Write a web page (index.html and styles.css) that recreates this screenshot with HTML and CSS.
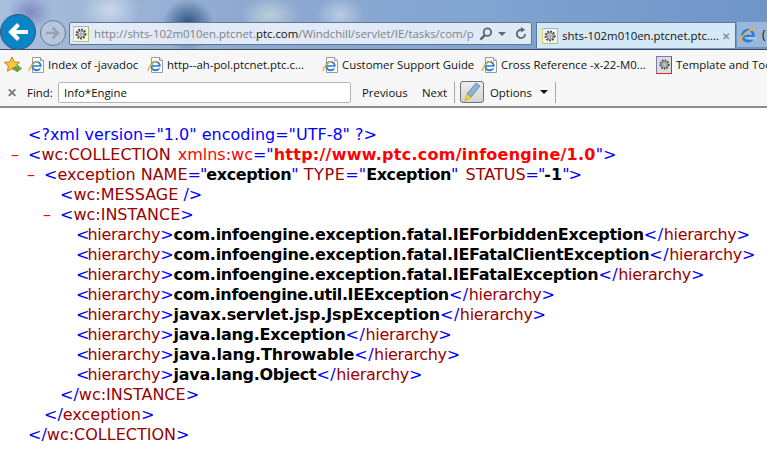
FILE: index.html
```html
<!DOCTYPE html>
<html lang="en">
<head>
<meta charset="utf-8">
<title>XML view</title>
<link rel="stylesheet" href="styles.css">
</head>
<body>
<svg class="defs" width="0" height="0" aria-hidden="true">
  <symbol id="ie" viewBox="0 0 18 18">
    <path d="M4.500 1.500h8l3 3V16.500h-11z" fill="#fff" stroke="#9a9aa4"/>
    <path d="M12.500 1.500v3h3" fill="#e8e8ee" stroke="#9a9aa4"/>
    <circle cx="8.500" cy="10" r="4.200" fill="none" stroke="#2b7fd8" stroke-width="2"/>
    <path d="M4.500 10h8" stroke="#2b7fd8" stroke-width="1.600"/>
    <rect x="9.500" y="10.800" width="5" height="1.600" fill="#fff"/>
    <path d="M1.200 15C.6 12 5 7 10 5" fill="none" stroke="#f0b92c" stroke-width="1.500"/>
  </symbol>
  <symbol id="gear" viewBox="0 0 16 16">
    <circle cx="8" cy="8" r="5" fill="none" stroke="#444" stroke-width="2.400" stroke-dasharray="2 1.300"/>
    <circle cx="8" cy="8" r="3.600" fill="none" stroke="#666" stroke-width="1"/>
    <circle cx="8" cy="8" r="1.500" fill="#e4e4e4" stroke="#555" stroke-width=".7"/>
  </symbol>
</svg>

<header class="chrome">
  <div class="back">
    <svg width="24" height="24" viewBox="0 0 24 24"><path d="M22 12H6M12.500 4.500 5 12l7.500 7.500" fill="none" stroke="#fff" stroke-width="4"/></svg>
  </div>
  <div class="forward">
    <svg width="18" height="18" viewBox="0 0 18 18"><path d="M2 9h12M8.500 3.500 14 9l-5.500 5.500" fill="none" stroke="#9aa3ad" stroke-width="2.600"/></svg>
  </div>
  <div class="address">
    <span class="site-tile"><svg width="14" height="14"><use href="#gear"/></svg></span>
    <span class="url">http://shts-102m010en.ptcnet.<b>ptc.com</b>/Windchill/servlet/IE/tasks/com/p</span>
    <span class="addr-tools">
      <svg width="14" height="14" viewBox="0 0 15 15"><circle cx="9" cy="5.500" r="4" fill="none" stroke="#5c6a78" stroke-width="2"/><path d="M6 9 1.500 13.500" stroke="#5c6a78" stroke-width="2.600"/></svg>
      <i class="caret grey"></i>
      <svg class="refresh" width="12" height="13" viewBox="0 0 13 14"><path d="M11 7.500A4.500 4.500 0 1 1 7 3" fill="none" stroke="#5c6a78" stroke-width="2"/><path d="M6.500 0 11 3 6.500 6z" fill="#5c6a78"/></svg>
    </span>
  </div>
  <div class="tab active">
    <span class="site-tile"><svg width="14" height="14"><use href="#gear"/></svg></span>
    <span class="tab-title">shts-102m010en.ptcnet.ptc....</span>
    <span class="tab-close">✕</span>
  </div>
  <div class="tab other">
    <svg width="20" height="20" viewBox="0 0 18 18"><circle cx="9" cy="9.500" r="5" fill="none" stroke="#2b7fd8" stroke-width="2.400"/><path d="M4.500 9.800h9" stroke="#2b7fd8" stroke-width="2"/><rect x="10" y="11" width="6" height="2" fill="#bcd3ea"/><path d="M1.500 16C1 12 8 5 15 3" fill="none" stroke="#f0b92c" stroke-width="1.500"/></svg>
    <span class="tab-title">(</span>
  </div>
</header>

<nav class="favorites">
  <svg class="star" width="18" height="18" viewBox="0 0 18 18"><path d="M8 1l2.200 4.800 5.300.6-3.900 3.600 1 5.200L8 12.600 3.400 15.200l1-5.200L.5 6.400l5.300-.6z" fill="#f6c83c" stroke="#b9862a"/><path d="M9 11.500h4V9l4.500 3.500L13 16v-2.500H9z" fill="#58b83a" stroke="#3b8a28" stroke-width=".6"/></svg>
  <a class="fav w1"><svg width="18" height="18"><use href="#ie"/></svg><span>Index of -javadoc</span></a>
  <a class="fav w2"><svg width="18" height="18"><use href="#ie"/></svg><span>http--ah-pol.ptcnet.ptc.c...</span></a>
  <a class="fav w3"><svg width="18" height="18"><use href="#ie"/></svg><span>Customer Support Guide</span></a>
  <a class="fav w4"><svg width="18" height="18"><use href="#ie"/></svg><span>Cross Reference -x-22-M0...</span></a>
  <a class="fav w5"><span class="fav-gear"><svg width="13" height="13"><use href="#gear"/></svg></span><span>Template and Too</span></a>
</nav>

<div class="findbar">
  <span class="find-close">✕</span>
  <label class="find-label">Find:</label>
  <div class="find-input">Info*Engine</div>
  <span class="find-btn prev">Previous</span>
  <span class="find-btn next">Next</span>
  <i class="sep"></i>
  <span class="hilite">
    <svg width="18" height="20" viewBox="0 0 18 20"><path d="M13 1l4 3L8 15l-4-3z" fill="#8cb2d8" stroke="#5b7f9f" stroke-width=".8"/><path d="M4 12l4 3-3 2-3 2z" fill="#f2e22c" stroke="#b5a820" stroke-width=".8"/></svg>
  </span>
  <span class="options">Options</span>
  <i class="caret"></i>
  <i class="sep last"></i>
</div>

<main class="xml">
  <div class="row d0"><span class="b">&lt;?xml version="1.0" encoding="UTF-8" ?&gt;</span></div>
  <div class="row d0"><span class="minus">–</span><span class="b">&lt;</span><span class="t">wc:COLLECTION</span> <span class="a">xmlns:wc</span><span class="b">="</span><span class="ns">http://www.ptc.com/infoengine/1.0</span><span class="b">"&gt;</span></div>
  <div class="row d1"><span class="minus">–</span><span class="b">&lt;</span><span class="t">exception</span> <span class="t">NAME</span><span class="b eq">="</span><span class="v tight">exception</span><span class="b">"</span> <span class="t loose">TYPE</span><span class="b">="</span><span class="v tight">Exception</span><span class="b">"</span> <span class="t st">STATUS</span><span class="b eq">="</span><span class="v flat">-1</span><span class="b eq">"&gt;</span></div>
  <div class="row d2"><span class="b">&lt;</span><span class="t">wc:MESSAGE</span><span class="b"> /&gt;</span></div>
  <div class="row d2"><span class="minus">–</span><span class="b">&lt;</span><span class="t">wc:INSTANCE</span><span class="b">&gt;</span></div>
  <div class="row d3"><span class="b open">&lt;</span><span class="t h">hierarchy</span><span class="b">&gt;</span><span class="v">com.infoengine.exception.fatal.IEForbiddenException</span><span class="b shut">&lt;/</span><span class="t h">hierarchy</span><span class="b">&gt;</span></div>
  <div class="row d3"><span class="b open">&lt;</span><span class="t h">hierarchy</span><span class="b">&gt;</span><span class="v">com.infoengine.exception.fatal.IEFatalClientException</span><span class="b shut">&lt;/</span><span class="t h">hierarchy</span><span class="b">&gt;</span></div>
  <div class="row d3"><span class="b open">&lt;</span><span class="t h">hierarchy</span><span class="b">&gt;</span><span class="v">com.infoengine.exception.fatal.IEFatalException</span><span class="b shut">&lt;/</span><span class="t h">hierarchy</span><span class="b">&gt;</span></div>
  <div class="row d3"><span class="b open">&lt;</span><span class="t h">hierarchy</span><span class="b">&gt;</span><span class="v util">com.infoengine.util.IEException</span><span class="b shut">&lt;/</span><span class="t h">hierarchy</span><span class="b">&gt;</span></div>
  <div class="row d3"><span class="b open">&lt;</span><span class="t h">hierarchy</span><span class="b">&gt;</span><span class="v slim">javax.servlet.jsp.JspException</span><span class="b shut">&lt;/</span><span class="t h">hierarchy</span><span class="b">&gt;</span></div>
  <div class="row d3"><span class="b open">&lt;</span><span class="t h">hierarchy</span><span class="b">&gt;</span><span class="v">java.lang.Exception</span><span class="b shut">&lt;/</span><span class="t h">hierarchy</span><span class="b">&gt;</span></div>
  <div class="row d3"><span class="b open">&lt;</span><span class="t h">hierarchy</span><span class="b">&gt;</span><span class="v slim">java.lang.Throwable</span><span class="b shut">&lt;/</span><span class="t h">hierarchy</span><span class="b">&gt;</span></div>
  <div class="row d3"><span class="b open">&lt;</span><span class="t h">hierarchy</span><span class="b">&gt;</span><span class="v">java.lang.Object</span><span class="b shut">&lt;/</span><span class="t h">hierarchy</span><span class="b">&gt;</span></div>
  <div class="row d2"><span class="b">&lt;/</span><span class="t">wc:INSTANCE</span><span class="b">&gt;</span></div>
  <div class="row d1"><span class="b">&lt;/</span><span class="t">exception</span><span class="b">&gt;</span></div>
  <div class="row d0"><span class="b">&lt;/</span><span class="t">wc:COLLECTION</span><span class="b">&gt;</span></div>
</main>
</body>
</html>
```
FILE: styles.css
```css
* { box-sizing: border-box; }
html, body { margin: 0; height: 100%; }
body {
  width: 767px;
  height: 464px;
  overflow: hidden;
  background: #fff;
  font-family: "Open Sans", "Noto Sans", sans-serif;
  color: #111;
}
.defs { position: absolute; }

/* Window chrome */
.chrome {
  height: 50px;
  padding: 22px 0 0 69px;
  display: flex;
  align-items: flex-start;
  position: relative;
  background:
    radial-gradient(ellipse 26px 26px at 188px 25px, rgba(20, 60, 110, .85), rgba(60, 110, 160, 0) 100%),
    radial-gradient(ellipse 30px 22px at 110px 10px, rgba(240, 245, 250, .55), transparent 100%),
    radial-gradient(ellipse 30px 18px at 270px 15px, rgba(225, 240, 225, .55), transparent 100%),
    radial-gradient(ellipse 25px 18px at 340px 15px, rgba(235, 240, 245, .5), transparent 100%),
    radial-gradient(ellipse 22px 18px at 30px 12px, rgba(90, 90, 170, .5), transparent 100%),
    linear-gradient(90deg, #a9bfdd 0%, #8fa9d0 30%, #83a5d2 60%, #6f94c6 100%);
  border-bottom: 1px solid #3c4a5c;
}
.back {
  position: absolute;
  left: 0;
  top: 14px;
  width: 36px;
  height: 36px;
  border-radius: 50%;
  background: #0c84c8;
  border: 1px solid #33587c;
  display: flex;
  align-items: center;
  justify-content: center;
}
.forward {
  position: absolute;
  left: 40px;
  top: 20px;
  width: 26px;
  height: 26px;
  border-radius: 50%;
  background: rgba(190, 205, 225, .7);
  border: 1px solid #66788f;
  display: flex;
  align-items: center;
  justify-content: center;
}
.address {
  width: 463px;
  height: 23px;
  flex: none;
  display: flex;
  align-items: center;
  padding: 0 4px 0 3px;
  background: rgba(232, 240, 249, .92);
  border: 1px solid #5f7795;
  border-radius: 2px;
  font-size: 11.4px;
  color: #7d8288;
}
.url {
  flex: 1;
  min-width: 0;
  margin-left: 5px;
  overflow: hidden;
  white-space: nowrap;
}
.url b { font-weight: 400; color: #111; }
.site-tile {
  width: 16px;
  height: 16px;
  flex: none;
  display: flex;
  align-items: center;
  justify-content: center;
  background: #f4f4f4;
  border: 1px solid;
  border-color: #8fb4dc #9ccf5f #9ccf5f #e6d25a;
}
.addr-tools { display: flex; align-items: center; gap: 5px; flex: none; margin-left: 3px; }
.refresh { margin-left: 4px; }
.tab {
  height: 26px;
  display: flex;
  align-items: center;
  flex: none;
}
.tab.active {
  width: 200px;
  margin-left: 4px;
  padding: 0 5px;
  background: #d5e8f8;
  border: 1px solid #5f7795;
  border-bottom: none;
  font-size: 11.4px;
  color: #111;
}
.tab-title { margin-left: 4px; white-space: nowrap; flex: 1; }
.tab-close { color: #8a8f95; font-size: 10px; font-weight: 700; }
.tab.other {
  flex: 1;
  margin-left: 1px;
  padding-left: 1px;
  height: 25px;
  min-width: 30px;
  background: rgba(190, 210, 235, .55);
  font-size: 12px;
}

/* Favorites */
.favorites {
  height: 28px;
  display: flex;
  align-items: center;
  padding: 1px 0 0 4px;
  background: #f7f7f7;
  font-size: 11.4px;
  white-space: nowrap;
}
.star { flex: none; margin-right: 6px; }
.fav { display: flex; align-items: center; gap: 2px; flex: none; color: #111; }
.w1 { width: 119px; }
.w2 { width: 175px; }
.w3 { width: 159px; }
.w4 { width: 175px; }
.fav-gear {
  width: 16px; height: 18px; display: flex; align-items: center; justify-content: center;
  margin-right: 2px;
  background: #ddd;
  border: 1px solid;
  border-color: #7a7ab8 #d22 #d22 #7a7ab8;
}

/* Find bar */
.findbar {
  height: 30px;
  display: flex;
  align-items: center;
  background: #f7f7f7;
  border-bottom: 2px solid #8d8d8d;
  font-size: 11.4px;
  padding-left: 7px;
  white-space: nowrap;
}
.find-close { color: #777; font-size: 12px; font-weight: 700; width: 20px; }
.find-label { width: 31px; }
.find-input {
  width: 293px;
  height: 21px;
  padding: 0 5px;
  display: flex;
  align-items: center;
  background: #fff;
  border: 1px solid #b5b5b5;
  border-radius: 2px;
}
.find-btn { flex: none; }
.prev { margin-left: 11px; width: 60px; }
.next { width: 32px; }
.sep { width: 1px; height: 21px; background: #a6a6a6; flex: none; }
.sep.last { margin-left: 7px; }
.hilite {
  width: 24px;
  height: 22px;
  margin-left: 5px;
  display: flex;
  align-items: center;
  justify-content: center;
  background: linear-gradient(#ececec, #d4d4d4);
  border: 1px solid #6f6f6f;
  border-radius: 3px;
  flex: none;
}
.options { margin-left: 6px; }
.caret {
  width: 0; height: 0; flex: none;
  border: 4px solid transparent;
  border-top: 4px solid #111;
  border-bottom: 0;
  margin-left: 8px;
}
.caret.grey { border-top-color: #5c6a78; margin-left: 0; }

/* XML tree */
.xml {
  padding-top: 17px;
  font-family: "DejaVu Sans", sans-serif;
  font-size: 16px;
  line-height: 20px;
}
.row { height: 20px; position: relative; white-space: pre; }
.d0 { padding-left: 28px; }
.d1 { padding-left: 44px; }
.d2 { padding-left: 60px; }
.d3 { padding-left: 76px; }
.minus { position: absolute; margin-left: -17px; color: #f00; }
.b { color: #00f; }
.t { color: #900; }
.a { color: #f00; margin-left: 2px; }
.v { color: #000; font-weight: 700; letter-spacing: -.28px; }
.ns { color: #f00; font-weight: 700; letter-spacing: .25px; }

/* Per-run spacing, to hold each run to the reference's column */
.open { letter-spacing: -2px; }
.shut { letter-spacing: .5px; }
.h { letter-spacing: -.3px; }
.eq { letter-spacing: -1px; }
.tight { letter-spacing: -.4px; }
.flat { letter-spacing: 0; }
.loose { letter-spacing: .6px; }
.st { margin-left: 2px; }
.util { letter-spacing: -.38px; }
.slim { letter-spacing: -.14px; }
```
